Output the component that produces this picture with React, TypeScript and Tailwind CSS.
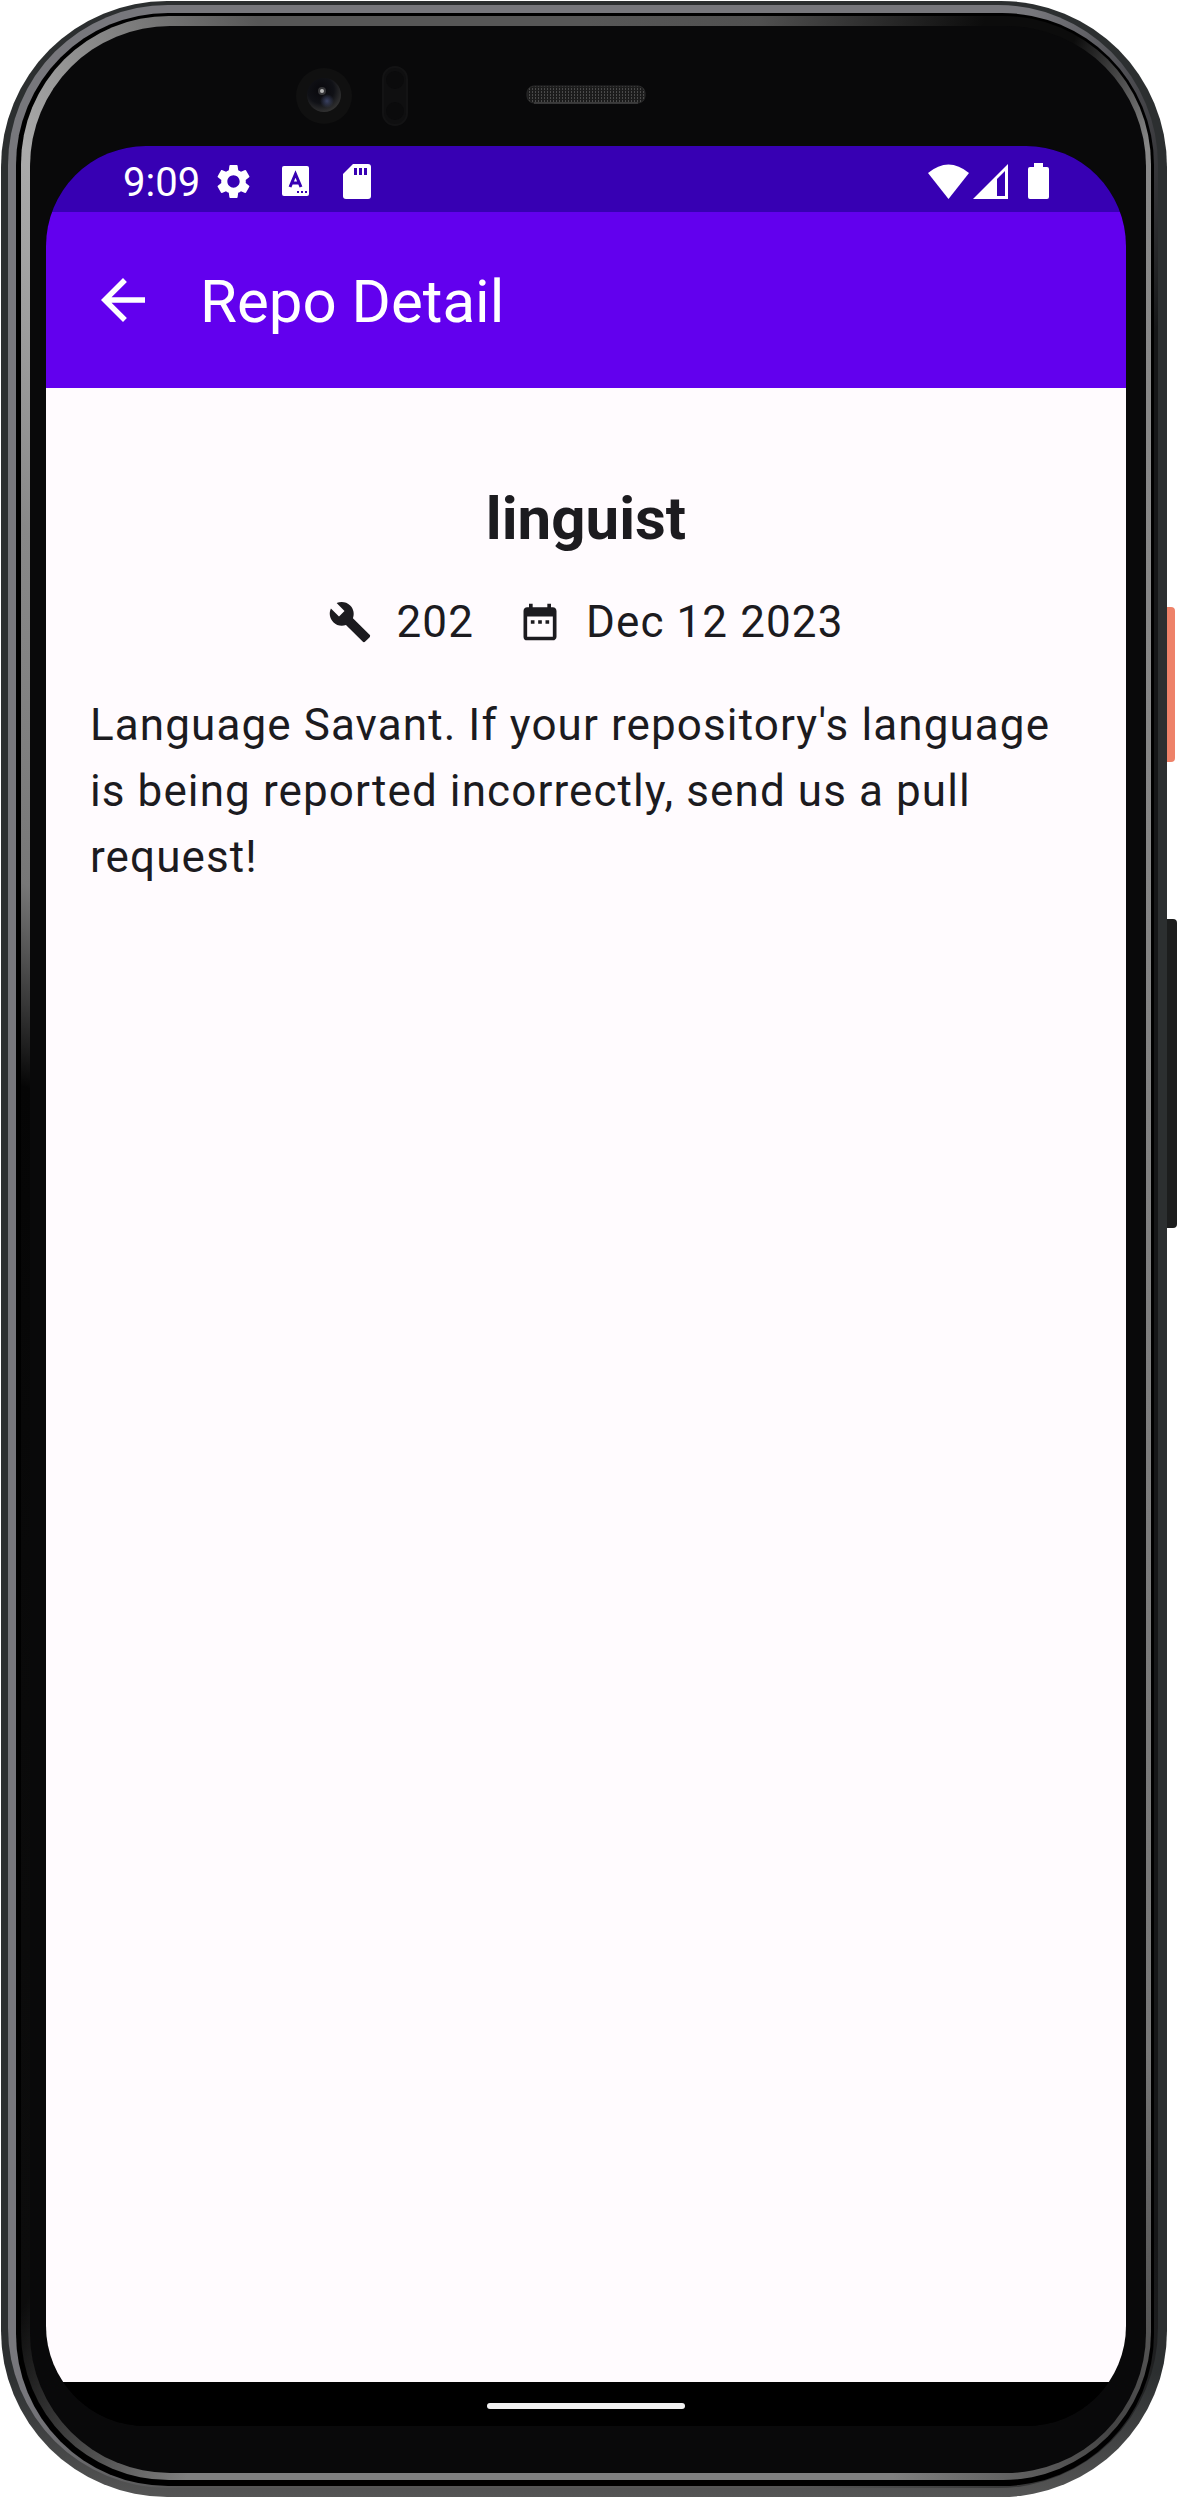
import { MdArrowBack, MdBuild, MdDateRange, MdSettings } from "react-icons/md";

function StatusBar() {
  return (
    <div className="flex h-[66px] items-center justify-between bg-[#3700b3] px-[77px] pt-1 text-white">
      <div className="flex items-center">
        <span className="pt-1 text-[40px] leading-none">9:09</span>
        <MdSettings className="ml-[13px] size-[41px]" aria-hidden="true" />
        <svg className="ml-7 h-[30px] w-[27px]" viewBox="0 0 27 30" aria-hidden="true">
          <rect width="27" height="30" rx="2" fill="currentColor" />
          <path d="M8 21 13.500 8 19 21M10 17h7" fill="none" stroke="#3700b3" strokeWidth="3" />
          <path d="M15 25h2v2h-2zM19 25h2v2h-2zM23 25h2v2h-2z" fill="#3700b3" />
        </svg>
        <svg className="ml-[34px] h-[35px] w-[28px]" viewBox="0 0 28 35" aria-hidden="true">
          <path d="M10 0h15a3 3 0 0 1 3 3v29a3 3 0 0 1-3 3H3a3 3 0 0 1-3-3V10z" fill="currentColor" />
          <path d="M11 4h3v7h-3zM16 4h3v7h-3zM21 4h3v7h-3z" fill="#3700b3" />
        </svg>
      </div>
      <div className="flex items-center">
        <svg className="h-[35px] w-[41px]" viewBox="0 0 41 35" aria-hidden="true">
          <path d="M0 9Q20.500-8 41 9L20.500 35z" fill="currentColor" />
        </svg>
        <svg className="ml-1 h-[35px] w-[35px]" viewBox="0 0 35 35" aria-hidden="true">
          <path d="M35 0v35H0zM32 7 24 15V32h8z" fillRule="evenodd" fill="currentColor" />
        </svg>
        <svg className="ml-5 h-[36px] w-[21px]" viewBox="0 0 21 36" aria-hidden="true">
          <path d="M6 0h9v4h4a2 2 0 0 1 2 2v28a2 2 0 0 1-2 2H2a2 2 0 0 1-2-2V6a2 2 0 0 1 2-2h4z" fill="currentColor" />
        </svg>
      </div>
    </div>
  );
}

function Screen() {
  return (
    <div className="flex grow flex-col overflow-hidden rounded-[100px] bg-black">
      <StatusBar />
      <header className="flex h-[176px] items-center gap-[44px] bg-[#6200ee] pl-11 text-white">
        <button type="button" aria-label="Back" className="flex size-[66px] items-center justify-center">
          <MdArrowBack className="size-[66px]" aria-hidden="true" />
        </button>
        <h1 className="pt-1 text-[60px] leading-[76px]">Repo Detail</h1>
      </header>
      <main className="flex grow flex-col items-center bg-[#fffbfe] px-[44px] pt-[93px] text-[#1c1b1f]">
        <h2 className="text-[60px] leading-[76px] font-bold">linguist</h2>
        <div className="mt-8 flex items-center text-[44px] leading-[66px] tracking-wide">
          <MdBuild className="size-[44px]" aria-hidden="true" />
          <span className="ml-6">202</span>
          <MdDateRange className="ml-[44px] size-[44px]" aria-hidden="true" />
          <span className="ml-6">Dec 12 2023</span>
        </div>
        <p className="mt-[37px] self-stretch text-[44px] leading-[66px] tracking-wide">
          Language Savant. If your repository's language is being reported incorrectly, send us a pull
          request!
        </p>
      </main>
      <nav aria-label="System navigation" className="flex h-11 items-center justify-center bg-black pt-1">
        <span className="h-[6px] w-[198px] rounded-full bg-[#f2f2f2]" />
      </nav>
    </div>
  );
}

function Sensors() {
  return (
    <div className="flex h-[120px] items-center pt-5 pl-[249px]" aria-hidden="true">
      <svg className="size-[58px]" viewBox="0 0 58 58">
        <defs>
          <radialGradient id="lens" cx="40%" cy="35%" r="65%">
            <stop offset="0" stopColor="#08080c" />
            <stop offset="0.6" stopColor="#101116" />
            <stop offset="1" stopColor="#303030" />
          </radialGradient>
          <radialGradient id="glint">
            <stop offset="0" stopColor="#454e75" stopOpacity="0.8" />
            <stop offset="1" stopColor="#454e75" stopOpacity="0" />
          </radialGradient>
        </defs>
        <circle cx="29" cy="29" r="28" fill="#101010" />
        <circle cx="29" cy="28" r="17" fill="url(#lens)" />
        <circle cx="32" cy="34" r="7" fill="url(#glint)" />
        <circle cx="27" cy="24" r="4" fill="#777777" opacity="0.4" />
        <circle cx="27" cy="24" r="2" fill="#b5b5b5" />
      </svg>
      <svg className="ml-[29px] h-[60px] w-[26px]" viewBox="0 0 26 60">
        <rect x="1" y="1" width="24" height="58" rx="12" fill="#0f0f10" stroke="#131314" strokeWidth="2" />
        <circle cx="13" cy="14" r="9" fill="#0b0b0c" />
        <circle cx="13" cy="45" r="9" fill="#0b0b0c" />
      </svg>
      <svg className="mb-1 ml-[118px] h-[19px] w-[120px]" viewBox="0 0 120 19">
        <defs>
          <pattern id="mesh" width="3" height="3" patternUnits="userSpaceOnUse">
            <rect width="3" height="3" fill="#1c1c1c" />
            <rect width="1" height="2" fill="#4a4a4a" />
          </pattern>
        </defs>
        <rect x="1" y="1" width="118" height="17" rx="7" fill="url(#mesh)" stroke="#2a2a2a" />
        <path d="M8 18h104" stroke="#555555" />
      </svg>
    </div>
  );
}

export default function App() {
  return (
    <div className="flex min-h-screen bg-white py-px pl-px font-[Roboto,sans-serif]">
      <div className="flex grow rounded-[166px] bg-[linear-gradient(to_bottom,#2c2f30_95%,#555555)] pt-1 pr-[9px] pb-[9px] pl-[7px]">
        <div className="flex grow rounded-[160px] bg-[conic-gradient(#77777c_20deg,#55555a_24deg,#161718_32deg,#161718_150deg,#555555_170deg,#555555_198deg,#77777c_206deg,#77777c)] pt-2 pr-1 pb-0.5 pl-2">
          <div className="flex grow rounded-[152px] bg-black pt-[3px] pr-[3px] pb-[6px] pl-[5px]">
            <div className="flex grow rounded-[148px] bg-[conic-gradient(#575757,#505050_8deg,#0c0c0c_18deg,#0c0c0c_22deg,#888888_27deg,#777777_145deg,#444444_156deg,#808080_166deg,#808080_198deg,#0c0c0c_208deg,#050505_286deg,#777777_303deg,#888888_322deg,#aaaaaa_333deg,#575757_345deg)] pt-[10px] pr-[5px] pb-[7px] pl-[9px]">
              <div className="flex grow flex-col rounded-[140px] bg-[#09090a] pr-5 pb-[47px] pl-4">
                <Sensors />
                <Screen />
              </div>
            </div>
          </div>
        </div>
      </div>
      <div className="flex w-[11px] shrink-0 flex-col">
        <span className="mt-[606px] h-[155px] w-2 shrink-0 rounded-r-sm bg-[#ee8269]" />
        <span className="mt-[157px] h-[309px] w-[10px] shrink-0 rounded-r-sm bg-[#1c1d1d]" />
      </div>
    </div>
  );
}
